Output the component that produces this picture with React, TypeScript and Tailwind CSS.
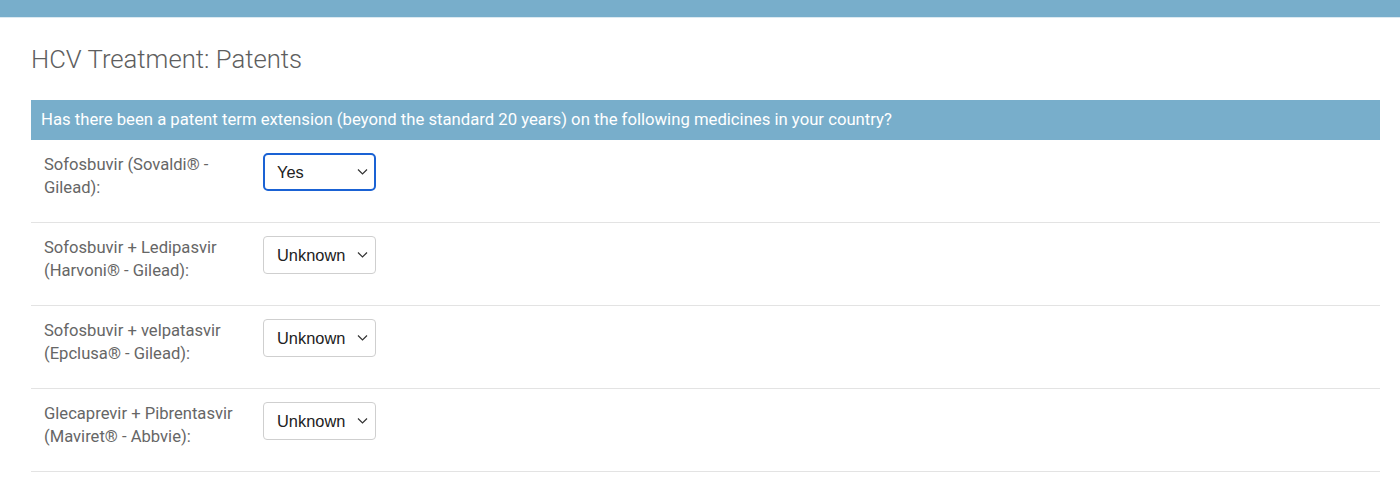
import React from 'react';

interface RowProps {
  label: string[];
  value: string;
  focused?: boolean;
}

const Chevron = () => (
  <svg width="11" height="7" viewBox="0 0 11 7" fill="none" className="absolute right-[8px] top-1/2 -translate-y-1/2 pointer-events-none">
    <path d="M1 1l4.5 4.5L10 1" stroke="#333" strokeWidth="1.2" />
  </svg>
);

const Row: React.FC<RowProps> = ({ label, value, focused }) => {
  return (
    <div className="flex h-[83px] border-b border-[#e3e3e3] pt-[13px]">
      <div className="w-[232px] pl-[13px] text-[16.6px] leading-[23px] text-[#666]">
        {label.map((l, i) => (
          <div key={i}>{l}</div>
        ))}
      </div>
      <div className="relative h-[38px] w-[113px]">
        <select
          defaultValue={value}
          className={
            focused
              ? 'h-full w-full appearance-none rounded-[5px] border-2 border-[#1a62d4] bg-white pl-[12px] text-[16.4px] text-[#222] outline-none'
              : 'h-full w-full appearance-none rounded-[4px] border border-[#cfcfcf] bg-white pl-[13px] text-[16.4px] text-[#222] outline-none'
          }
          style={{ fontFamily: '"Liberation Sans", Arial, sans-serif' }}
        >
          <option>Yes</option>
          <option>No</option>
          <option>Unknown</option>
        </select>
        <Chevron />
      </div>
    </div>
  );
};

export default function App() {
  const rows: RowProps[] = [
    { label: ['Sofosbuvir (Sovaldi® -', 'Gilead):'], value: 'Yes', focused: true },
    { label: ['Sofosbuvir + Ledipasvir', '(Harvoni® - Gilead):'], value: 'Unknown' },
    { label: ['Sofosbuvir + velpatasvir', '(Epclusa® - Gilead):'], value: 'Unknown' },
    { label: ['Glecaprevir + Pibrentasvir', '(Maviret® - Abbvie):'], value: 'Unknown' },
  ];

  return (
    <div className="min-h-[479px] bg-white" style={{ fontFamily: 'Roboto, "Liberation Sans", sans-serif' }}>
      <div className="h-[18px] bg-[#78aecb] border-b border-[#dbe9f1]" />
      <div className="px-[31px] pr-[20px]">
        <h1 className="pt-[25px] text-[25.7px] font-light leading-[32px] text-[#5e5e5e]">HCV Treatment: Patents</h1>
        <div className="mt-[25px]">
          <div className="flex h-[40px] items-center bg-[#78aecb] px-[10px] text-[16.7px] text-white">
            Has there been a patent term extension (beyond the standard 20 years) on the following medicines in your country?
          </div>
          {rows.map((r, i) => (
            <Row key={i} {...r} />
          ))}
        </div>
      </div>
    </div>
  );
}
